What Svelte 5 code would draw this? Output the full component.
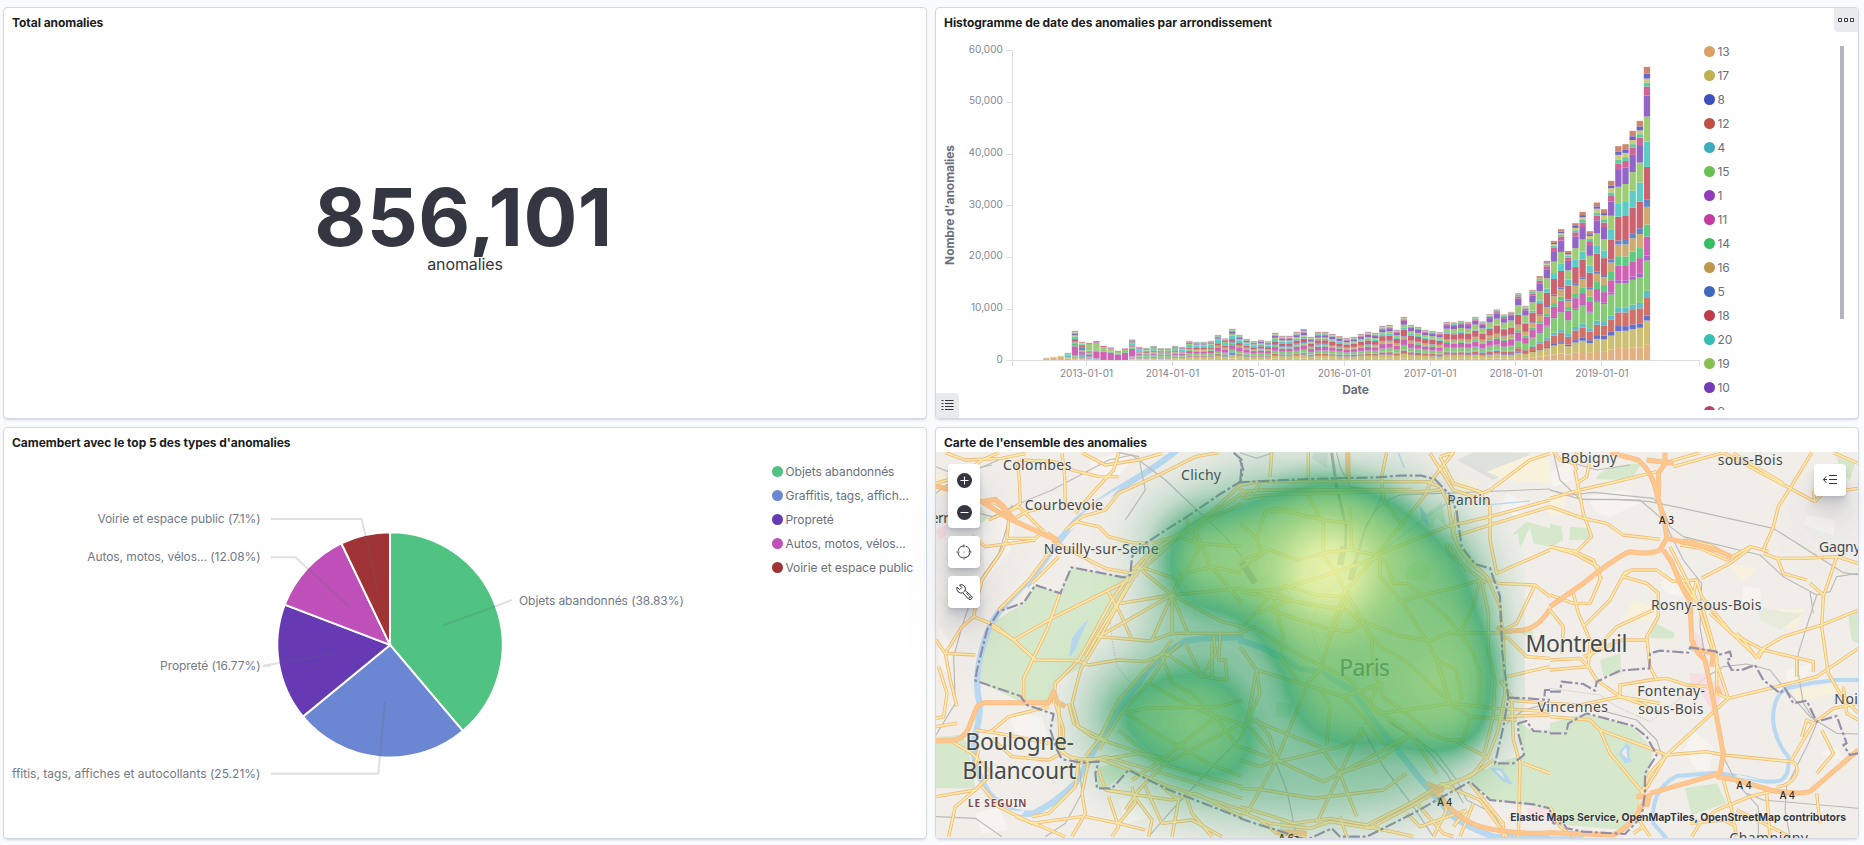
<script>
  // ---- histogram ----
  const legend = [
    ['13', '#daa066'], ['17', '#bfaf4f'], ['8', '#3d4fbd'], ['12', '#c04e43'], ['4', '#38aebd'],
    ['15', '#69c151'], ['1', '#903abc'], ['11', '#c53aa2'], ['14', '#36bf62'], ['16', '#c09648'],
    ['5', '#3c68bd'], ['18', '#c13a49'], ['20', '#34bfb4'], ['19', '#87c051'], ['10', '#753abc'], ['9', '#c03b7a']
  ];
  const stackColors = [
    '#e2b182', '#cdc075', '#6370cc', '#d07269', '#5fbcc8', '#86cc76', '#a866c9', '#d062b6', '#5dcb83', '#cdac70',
    '#6487c9', '#cd636f', '#5dccc4', '#9ecd75', '#9265c9', '#cf6495', '#60cb9c', '#cdca78', '#6a65c9', '#cd866f'
  ];
  const heights = [
    7, 10, 13, 22, 88, 55, 52, 57, 43, 38, 28, 35, 62, 40, 37, 43, 36, 36, 43, 40, 58, 55, 55, 58, 76, 65, 94, 76, 64, 57, 61, 57,
    82, 73, 73, 85, 93, 70, 85, 85, 79, 72, 67, 70, 79, 85, 82, 103, 106, 91, 130, 106, 100, 91, 88, 84, 115, 113, 118, 115,
    130, 116, 138, 152, 137, 145, 201, 163, 211, 252, 298, 358, 393, 328, 411, 445, 387, 473, 453, 538, 642, 648, 688, 718, 880
  ];
  const mixes = [
    [4, [3, 4, 0, 2, 4, 3, 2, 34, 12, 3, 4, 8, 9, 6, 4, 3, 3, 2, 2, 2]],
    [5, [3, 3, 0, 2, 6, 4, 3, 6, 3, 3, 10, 7, 3, 2, 0, 0, 0, 3, 0, 3]],
    [6, [2, 2, 0, 2, 3, 2, 2, 6, 3, 2, 2, 2, 5, 22, 2, 2, 0, 0, 0, 0]],
    [8, [0, 0, 0, 0, 0, 0, 0, 25, 2, 0, 0, 0, 0, 12, 1, 3, 0, 0, 0, 0]],
    [11, [0, 0, 0, 0, 0, 0, 0, 22, 2, 0, 0, 0, 3, 3, 2, 2, 0, 0, 0, 0]],
    [13, [4, 5, 2, 3, 3, 4, 2, 5, 3, 3, 2, 4, 7, 4, 3, 2, 2, 1, 1, 1]],
    [23, [4, 9, 2, 3, 2, 5, 2, 9, 3, 3, 2, 6, 10, 4, 4, 2, 2, 1, 1, 1]],
    [38, [5, 11, 2, 4, 2, 9, 2, 12, 3, 4, 3, 12, 5, 4, 8, 2, 3, 2, 2, 3]],
    [50, [5, 14, 2, 9, 3, 12, 2, 15, 3, 7, 2, 19, 8, 8, 12, 3, 3, 2, 2, 2]],
    [66, [7, 16, 3, 11, 4, 18, 3, 24, 7, 14, 3, 30, 2, 28, 20, 7, 5, 2, 1, 2]],
    [72, [20, 29, 5, 29, 10, 50, 4, 31, 12, 22, 5, 50, 23, 34, 34, 12, 5, 5, 5, 7]],
    [78, [28, 36, 12, 30, 12, 55, 5, 32, 22, 24, 7, 52, 24, 34, 38, 14, 10, 12, 7, 12]],
    [84, [46, 73, 15, 55, 19, 91, 15, 57, 36, 53, 23, 97, 76, 75, 63, 27, 12, 12, 15, 20]]
  ];
  function mixFor(i) {
    if (i < 3) return [8, 2, 0, 0, 0, 0, 0, 0, 0, 0, 0, 0, 0, 0, 0, 0, 0, 0, 0, 0];
    if (i < 4) return [6, 4, 0, 0, 4, 2, 0, 0, 3, 0, 0, 0, 3, 0, 0, 0, 0, 0, 0, 2];
    let k = 0;
    while (k < mixes.length - 2 && mixes[k + 1][0] <= i) k++;
    const [a, va] = mixes[k];
    const [b, vb] = mixes[k + 1];
    const sa = va.reduce((x, y) => x + y, 0);
    const sb = vb.reduce((x, y) => x + y, 0);
    const t = (i - a) / (b - a);
    return va.map((v, j) => (v / sa) * (1 - t) + (vb[j] / sb) * t);
  }
  const segments = heights.flatMap((h, i) => {
    const mix = mixFor(i);
    const sum = mix.reduce((x, y) => x + y, 0);
    let y = 360.2;
    return mix.map((m, j) => {
      const sh = (m / sum) * (h / 3);
      y -= sh;
      return { x: 1043.2 + i * 7.15, y, h: sh, c: stackColors[j] };
    }).filter((s) => s.h > 0.05);
  });
  const yTicks = [0, 10, 20, 30, 40, 50, 60].map((v) => ({
    label: v ? v + ',000' : '0', y: 360.3 - v * 5.17
  }));
  const xTicks = [2013, 2014, 2015, 2016, 2017, 2018, 2019].map((y, i) => ({
    label: y + '-01-01', x: 1086.4 + i * 85.9
  }));

  // ---- pie ----
  const slices = [
    ['Objets abandonnés', 38.83, '#50c282'],
    ['Graffitis, tags, affich...', 25.21, '#6b86d2'],
    ['Propreté', 16.77, '#663ab2'],
    ['Autos, motos, vélos...', 12.08, '#bf50b9'],
    ['Voirie et espace public', 7.11, '#a03335']
  ];
  const cx = 390, cy = 644.9, r = 112.7;
  let acc = 0;
  const wedges = slices.map(([, pct, color]) => {
    const a0 = (acc / 100) * 2 * Math.PI;
    acc += pct;
    const a1 = (acc / 100) * 2 * Math.PI;
    return {
      color,
      d: `M${cx} ${cy}L${cx + r * Math.sin(a0)} ${cy - r * Math.cos(a0)}A${r} ${r} 0 0 1 ${cx + r * Math.sin(a1)} ${cy - r * Math.cos(a1)}Z`
    };
  });
  const leaders = [
    'M813 291H1085L1133 503', 'M813 406H886L1047 553', 'M813 731H788L1003 695', 'M813 1055H1135L1155 838',
    'M1535 534L1500 548L1330 610'
  ];
  const pieLabels = [
    ['Voirie et espace public (7.1%)', 260.5, 522.8, 'end', -0.09],
    ['Autos, motos, vélos... (12.08%)', 260.5, 561, 'end', -0.09],
    ['Propreté (16.77%)', 260.5, 670, 'end', -0.07],
    ['Graffitis, tags, affiches et autocollants (25.21%)', 260.5, 778, 'end', 0.01],
    ['Objets abandonnés (38.83%)', 519, 605, 'start', -0.07]
  ];

  // ---- map, three tiles drawn at triple resolution ----
  const tiles = [
    {
      x: 932,
      blocks: ['M150 240L220 190L250 250L230 340L160 420Z', 'M470 60L560 40L600 60L560 110L490 120Z', 'M230 820L330 830L350 900L250 880Z', 'M20 560L60 620L50 700L20 680Z', 'M560 1080L640 1060L660 1130L580 1150Z', 'M130 1120L200 1100L230 1170L150 1180Z'],
      parks: ['M418 380L575 412L600 405L560 480L500 590L450 680L380 720L365 780L275 790L205 755L137 720L150 640L180 550L225 520L275 490L310 435L385 458Z', 'M12 890L95 884L112 940L130 1045L12 1045Z', 'M495 985L555 965L580 1000L520 1045L497 1045Z', 'M350 1085L395 1050L430 1030L400 1080L365 1105Z', 'M130 180L170 230L150 250L120 240Z'],
      greys: [],
      yellows: ['M12 100L60 110L40 170L12 160Z'],
      pinks: ['M12 270L50 250L40 290L20 300Z'],
      lakes: ['M470 538L445 560L420 595L412 652L430 630L445 590Z'],
      river: ['M735 30Q690 70 580 135Q500 180 430 245Q390 290 360 330L290 430L205 510Q165 560 150 630Q125 720 143 790Q145 840 125 900Q120 980 170 1060Q235 1130 305 1120Q370 1090 430 1030Q470 970 500 900L560 810L640 700Q690 640 760 603Q830 590 935 592'],
      islands: ['M565 142L500 180L420 250L412 275L430 260L520 190Z', 'M350 335L300 415L290 420L310 375Z', 'M285 440L225 500L270 490L300 455Z', 'M210 1095Q240 1120 280 1110L270 1125L225 1120Z'],
      rail: ['M12 160L70 115L200 60', 'M12 80L60 100L180 75', 'M70 200L180 230L240 200L360 150L530 60L600 45L700 120L880 290L930 350', 'M240 195L225 260L200 340L130 440L90 560L65 650L70 790L12 885', 'M12 1130L130 1135L210 1190', 'M440 955L450 1060L400 1150L340 1190', 'M930 890L860 960L720 1110L650 1190', 'M560 38L620 50L640 150L580 240'],
      dotted: ['M535 540L540 600L555 680L600 735L650 730', 'M430 330L520 410'],
      minor: [
        'M40 38L100 60L210 55L280 40', 'M12 130L80 110L150 60L200 38', 'M255 60L262 120L265 190L230 215', 'M390 40L398 110L400 200', 'M265 60L370 65L420 90L500 110L560 110', 'M450 38L520 75L620 60L690 40', 'M560 38L545 90L480 160L430 220',
        'M150 190Q210 175 230 240L225 295L310 295L340 270', 'M170 240L260 200L330 270L350 295', 'M240 240L285 215L350 200', 'M120 285L160 320L235 310L310 300', 'M225 300L205 340L150 420L130 500L125 530L175 550L200 565L245 600L310 660L430 662',
        'M12 600L40 640L90 560L125 530', 'M40 640L130 645', 'M40 640L55 720L75 800', 'M20 680L45 760L35 830L12 835', 'M12 860L75 850', 'M360 300L430 340L520 385L600 400', 'M400 270L450 230L520 210L560 160L700 95L790 50L860 38', 'M430 245L500 260L530 290L600 308L650 310',
        'M365 320L290 420L200 510', 'M300 430L320 410L380 350', 'M180 560L245 600L360 535L590 420', 'M385 458L345 570L275 715L275 790', 'M245 600L300 650',
        'M600 400Q620 360 680 320L830 230L930 160', 'M610 410Q640 345 700 310L840 215L930 130', 'M600 395L540 480L480 590L440 660L370 730L365 790', 'M610 405L560 490L500 600L445 690L420 790L440 860L520 900', 'M590 430L555 490L500 580L460 650',
        'M600 385L640 385L740 420L720 465L565 490', 'M720 465L500 590L655 603L720 580L930 580', 'M720 465L660 600', 'M720 465L720 580', 'M720 465L770 585', 'M720 465L870 545L930 560', 'M720 465L930 445', 'M720 465L640 400L615 375', 'M720 465L800 330L760 230', 'M740 405L840 380L930 400', 'M640 380L740 290L800 310L930 320', 'M660 310L790 270L840 235L930 190', 'M790 270L830 370L930 490',
        'M525 450L565 520L600 600', 'M430 660L470 675L560 660L640 665L700 640', 'M720 600L690 640L640 690L560 780L500 900L460 950', 'M745 610L700 650L650 730L570 815L500 930', 'M700 640L810 710L885 720L880 660L860 660L865 580', 'M760 610L810 710L850 640L845 590', 'M840 610L840 715', 'M650 730L760 790L850 830L930 850', 'M570 820L640 805L860 800L930 780', 'M575 815L690 890L830 970L930 1010', 'M690 650L720 730L780 760L850 830L925 930', 'M850 830L690 960L600 1020', 'M560 870L640 940L720 960L930 850',
        'M410 790L425 850L480 890L600 930L700 975L930 1040', 'M370 790L395 870L390 935Q420 965 500 955L580 985L700 1035L930 1110', 'M380 790L385 930L440 970L520 950L590 970L760 1020L930 1075', 'M500 960L620 940L710 960L620 1050L580 1110',
        'M130 870L200 880L350 910', 'M170 880L230 830L350 800', 'M180 895L240 950L350 960L390 940', 'M60 905L120 940L180 1000L130 1050L12 1070', 'M130 1050L70 1100L50 1190', 'M150 1040L200 1100L300 1150L450 1130', 'M440 960L430 1040L350 1120L300 1130', 'M470 960L450 1060L460 1120L420 1190', 'M500 990L520 1050L600 1060L660 1140L650 1190', 'M520 1050L580 1060L720 1080L790 1060L930 1130', 'M460 1130L560 1150L640 1170', 'M530 1070L560 1160L540 1190', 'M600 1040L610 1090L560 1150', 'M690 1040L740 1080L720 1190', 'M640 1040L690 1150L780 1140L870 1190', 'M760 1060L780 1120L840 1190', 'M250 1130L330 1160L400 1190', 'M140 930L120 1010'
      ],
      motor: ['M12 138L70 155L150 185L230 235L360 295', 'M150 185L190 178L215 200L250 245', 'M12 903L70 900Q105 890 115 850L135 800Q150 785 180 788L350 788L365 755L375 785L400 800', 'M345 280L375 300L365 310'],
      borders: ['M930 122L860 165L780 220L640 310L600 350L595 405L575 412L418 382L385 460L310 435L275 488L200 515L165 570L135 690L130 722L265 768L285 795L365 822L355 870L375 930L390 958L450 968L500 965L490 1000L495 1045L540 1045L590 990L700 1045L930 1135', 'M905 38L930 60L925 122'],
      labels: [['Colombes', 213, 91, 42, 205], ['Courbevoie', 278, 210, 42, 235], ['Clichy', 747, 119, 42, 120], ['Neuilly-sur-Seine', 335, 343, 42, 345], ['erre', -4, 248, 42, 76], ['Boulogne-', 100, 931, 69, 326], ['Billancourt', 91, 1018, 69, 342]]
    },
    {
      x: 1240,
      blocks: ['M800 160L860 190L830 230L780 210Z', 'M0 790L60 800L50 860L0 850Z', 'M670 640L720 640L700 700Z'],
      parks: ['M860 245L930 265L930 320L880 310L870 260L840 325L835 280L815 285Z', 'M495 395L535 355L575 390L560 420L500 420Z', 'M560 220L605 185L620 265L590 230L575 265Z', 'M835 845L880 875L930 870L930 1110L860 1095L750 1080L690 1025L765 970L850 945Z', 'M110 785L155 790L150 835L105 830Z', 'M830 570L875 565L885 605Z', 'M120 1135L200 1155L190 1185L120 1180Z', 'M680 1005L730 975L740 1000L700 1030Z'],
      greys: ['M700 38L865 38L870 60L760 120L650 60Z', 'M220 38L265 38L260 85L215 55Z'],
      yellows: ['M740 95L870 45L930 60L930 130L800 120Z', 'M650 110L720 130L690 160L650 150Z'],
      pinks: ['M860 1103L930 1100L930 1140L870 1140Z', 'M350 890L410 890L410 945L360 945Z'],
      lakes: ['M750 985L785 985L820 1035L790 1025Z', 'M538 195L560 225L570 262L545 240Z'],
      river: ['M-5 600L60 620L130 655L180 685L240 695L340 752L400 840L480 940L560 1040L640 1130Q680 1160 760 1190L930 1195'],
      islands: ['M230 690L300 745L285 752L230 705Z', 'M165 660L200 675L180 680Z', 'M765 990L782 993L795 1018Z'],
      canal: ['M430 330L560 230L620 190', 'M740 195L870 183', 'M475 38L493 83'],
      rail: ['M325 420L370 280Q400 190 480 165L600 160L930 147', 'M335 420L375 270L430 160', 'M440 840L520 890L590 940L650 1020L680 1080L760 1120L800 1190', 'M450 850L540 905L620 1000L670 1090', 'M365 860L430 980L520 1100L580 1190', 'M105 960L140 1050L170 1190', 'M800 850L850 810L930 790', 'M0 38L50 55L100 38', 'M290 38L300 80L330 140L440 155L600 150'],
      thickRail: ['M275 38L290 140L318 260L316 330', 'M345 360L330 420'],
      wideRail: ['M312 320L300 375', 'M342 380L332 420', 'M5 365L45 430'],
      dotted: ['M40 450L140 450L210 550L240 660', 'M210 550L280 430'],
      minor: [
        'M0 135L60 125L320 125L560 125L600 140L625 190L640 290L660 330L740 410', 'M0 155L70 150L300 150L515 148', 'M0 145L30 175L60 130', 'M0 175L80 165L250 160L420 155L540 155L600 150',
        'M95 38L90 110', 'M205 38L205 120', 'M440 38L425 110L430 180L490 260', 'M0 250L50 295L75 215L140 215L250 240L335 250', 'M75 215L110 205L180 215', 'M50 290L65 345L0 385', 'M0 360L90 330L170 360L270 335L335 330L410 345L620 260L750 230L930 180', 'M600 50L640 38L575 120L555 165L410 345', 'M410 345L440 370L460 430L500 430L545 465L640 445L720 420', 'M410 345L315 455L265 590', 'M250 240L250 345L285 395L320 460L370 550', 'M205 165L240 240', 'M330 200L335 330',
        'M0 450L50 455L150 440L290 395L420 350', 'M0 455L140 480L250 500L320 510L360 545', 'M130 435L230 465L310 470', 'M50 520L150 480L100 450L45 520L0 570', 'M100 470L130 590L125 640', 'M90 510L150 530L280 570L330 575L380 540', 'M315 455L370 550L420 620L500 665L630 790', 'M330 455L275 580L240 690L200 730', 'M420 350L420 410L485 485L560 600L590 660L630 790', 'M485 485L545 465L620 530L660 580L700 640L720 700L720 800', 'M385 550L470 585L565 603L625 580L740 578L790 580', 'M370 550L395 600L400 690L415 730', 'M720 420L700 500L660 580', 'M725 425L745 520L745 640L765 720L760 830L730 950', 'M740 410L780 500L790 600L795 760L775 870L740 960', 'M620 310L625 340L700 400L740 430', 'M690 370L740 410L775 430L885 435L930 470', 'M885 435L830 550L790 570', 'M650 210L640 280L660 330L690 370', 'M570 40L640 150L700 170L750 150L870 60L930 40', 'M600 50L640 130L720 155L750 200L750 300L770 400L930 330', 'M640 290L750 255L930 200', 'M630 310L680 395',
        'M0 580L40 560L150 630L330 720L400 800L510 880L590 1000', 'M0 620L50 690L180 730L310 770L400 740L430 730', 'M50 690L60 760L20 850', 'M180 730L120 650', 'M50 690L20 850L110 960L200 740', 'M310 770L370 830L440 920L500 890', 'M415 730L385 800L420 820L570 800L630 790', 'M415 730L430 770L500 820L570 880L620 900L670 900L690 830', 'M630 790L590 660L650 690L665 780', 'M630 790L690 830L830 840', 'M640 790L770 805L930 815', 'M20 830L110 870L240 920L300 1000L420 960L510 885', 'M0 920L110 960L250 1025L300 1000L430 930L500 890', 'M20 850L0 900', 'M240 740L270 800L260 920', 'M365 865L300 1000L350 1130', 'M110 960L60 1050L20 1120', 'M0 1045L60 1048L220 1075L430 1050L500 1000', 'M300 1000L230 1150', 'M110 965L160 955L300 920L380 880', 'M0 860L50 840L90 890L110 960L60 980L0 960', 'M0 1100L100 1130L160 1150L270 1135L380 1155L510 1090L590 1040L690 1010L760 960', 'M0 1115L90 1150L210 1165L270 1145L390 1165L520 1095L600 1050L700 1000L740 950L640 900', 'M60 1140L110 1180L200 1190', 'M380 1160L480 1180L520 1190', 'M300 1130L320 1190', 'M600 1030L720 1080L800 1190', 'M690 1030L740 1090L790 1150L790 1190', 'M590 1060L620 1110L580 1190', 'M530 1090L610 1180L640 1190', 'M500 1120L540 1160L680 1110', 'M805 780L930 790', 'M815 780L820 900L840 970L835 1190', 'M800 590L860 650L930 655', 'M800 710L930 680', 'M780 720L820 780', 'M765 830L930 825', 'M850 970L930 1000', 'M680 1110L640 1160', 'M700 1090L660 1190'
      ],
      motor: ['M323 38L325 125', 'M770 560L790 575L850 570Q900 560 930 505', 'M780 560L795 600', 'M560 1030L605 1050L570 1060', 'M600 1065Q640 1130 720 1160Q820 1185 930 1178', 'M110 1175L200 1180'],
      borders: ['M-5 127L200 117L410 112L480 107L545 107L585 118L630 165L650 215L665 320L705 372L750 385L780 470L787 640L805 773L790 860L765 970L820 970L852 945L835 880L835 850L860 843L880 873L930 876', 'M805 773L860 775L930 780', 'M0 60L10 90L0 127', 'M0 1135L60 1155L110 1170L200 1200L275 1165L300 1190L380 1190L520 1120L590 1080L690 1025L750 1080L880 1093L930 1105', 'M930 750L915 750L913 775'],
      labels: [['Pantin', 622, 194, 42, 130], ['Paris', 298, 708, 69, 152]]
    },
    {
      x: 1550,
      blocks: ['M0 100L60 60L70 120L10 140Z', 'M140 220L110 170L230 150L270 190L180 230Z', 'M330 430L380 390L400 470L350 460Z', 'M580 437L632 445L630 500L575 480Z', 'M770 225L855 240L850 285L760 255Z', 'M400 930L435 875L490 920L480 990L440 990Z', 'M50 850L110 835L120 880L60 880Z', 'M710 690L790 670L750 740L710 720Z', 'M810 940L860 920L880 960L830 950Z'],
      parks: ['M150 100L180 80L275 68L245 120L135 118Z', 'M0 250L35 260L40 300L5 320L0 310Z', 'M60 260L120 265L118 300L58 300Z', 'M310 545L375 580L370 595L300 595Z', 'M150 660L210 640L215 700L160 710Z', 'M0 850L110 820L250 860L310 930L280 1060L230 1170L40 1155L0 1110Z', 'M405 1045L500 1030L530 1090L425 1125Z', 'M895 530L925 515L925 610L905 600Z', 'M860 50L915 70L900 120L870 90Z'],
      pale: ['M620 500L700 515L760 520L690 570L630 540Z'],
      greys: [],
      yellows: ['M530 370L625 385L575 425Z', 'M250 480L330 510L300 545L220 540Z', 'M690 510L765 505L740 570L690 560Z', 'M730 750L860 730L890 750L740 785Z', 'M0 160L50 170L40 220L0 230Z'],
      pinks: ['M420 700L480 700L480 740L420 740Z', 'M440 730L520 720L520 760L490 820L470 790Z', 'M430 570L460 600L460 630L430 620Z', 'M0 1100L30 1120L0 1145Z'],
      lakes: ['M205 940L230 908L240 920L238 950L248 965L225 970Z'],
      river: ['M925 720L860 720L790 728L710 745Q665 770 670 850Q680 910 715 950Q720 1010 690 1022Q650 1030 600 1015L500 998L380 1008Q300 1050 310 1150L350 1195', 'M0 1195L100 1195'],
      islands: ['M560 1003L640 1022L560 1012Z', 'M215 940L228 920L232 955Z'],
      rail: ['M0 150L90 178L200 178L300 185L400 205L670 265L880 398L925 405', 'M0 150L60 165L130 157L310 175L340 205', 'M90 178L270 180L340 240L400 360L455 430L450 560L470 680L500 820L520 950L560 1030L625 1100L625 1190', 'M280 70L320 160L360 260L400 290L630 345L700 410L800 465L840 455L860 410L925 400', 'M800 465L770 560L745 640L745 700L760 790L800 850L775 910L740 980L710 1040L705 1110L720 1190', 'M10 38L30 120L90 178', 'M470 710L520 680L590 672L660 690L700 740L780 830L860 880L925 882', 'M130 805L260 840L320 900L340 960', 'M590 1060L640 1080L925 1105', 'M40 60L140 90L240 75', 'M780 455L790 520'],
      dotted: ['M0 745L150 765L200 800L300 845L360 800L470 710'],
      minor: [
        'M0 175L90 150L200 125L320 95', 'M0 200L100 235L170 250L220 285L330 298', 'M75 90L100 220L125 290L80 335L0 320', 'M120 60L110 110L80 130', 'M80 90L70 60L80 38', 'M370 80L520 38L720 145L795 185', 'M550 40L700 130', 'M785 38L720 145L685 200L670 260L640 330', 'M795 185L820 160L925 145', 'M795 185L790 150', 'M640 340L680 355L760 355L860 350L925 370', 'M680 350L700 400L770 420', 'M860 350L820 470L815 560L835 700L870 760L925 820', 'M390 315L450 325L530 360L600 320L640 330L655 335', 'M400 300L480 315L540 350', 'M455 415L540 370L600 325', 'M360 320L400 400L440 480L490 640L535 775', 'M345 340L420 460L460 510L500 650L500 760L535 775', 'M365 425L440 420L430 465L410 480', 'M440 420L455 470L545 580L620 650L640 625', 'M480 520L545 580L640 630L790 665L790 695', 'M640 625L700 590L815 555L925 510', 'M625 655L645 620', 'M620 655L580 600L560 580', 'M740 655L740 710', 'M535 775L660 745L800 710L925 625', 'M535 775L350 945L280 1060', 'M350 945L300 925L150 870L120 840L0 830', 'M150 870L180 940L280 1060', 'M350 945L470 935L520 945L725 965', 'M725 965Q745 970 740 1000Q720 1040 680 1040', 'M725 960L760 900L790 850L850 805L925 790', 'M790 850L770 840L755 890', 'M520 1020L545 1110L560 1190', 'M500 1110L600 1070L660 1055', 'M0 320L70 340L145 380L150 420L120 490L70 490L0 465', 'M75 335L130 360L155 420', 'M220 400L245 390L320 390L370 425', 'M245 390L220 405L180 480L100 560', 'M220 410L290 430L325 460L325 530L290 590L300 680L320 720', 'M70 460L85 520L120 600L115 680', 'M0 510L40 560L35 640', 'M100 650L150 630L210 600L290 600', 'M115 680L90 655L0 660', 'M115 680L0 690', 'M115 680L140 720L210 770L330 790', 'M210 770L210 735L300 720L350 715L410 735L470 740', 'M350 945L300 1000L270 1070', 'M0 1100L30 1160L70 1190', 'M0 790L90 795L210 770', 'M210 770L270 790L330 820', 'M110 660L200 560L310 510', 'M780 430L820 465', 'M850 38L925 70', 'M450 38L340 70', 'M650 1060L660 1190', 'M800 1060L810 1150', 'M500 1110L450 1150L425 1190', 'M270 1090L260 1130L300 1190', 'M280 1160L250 1180', 'M560 1110L640 1150L720 1190', 'M880 740L890 820L925 840', 'M815 870L850 940L800 1000', 'M0 20L30 60L70 70', 'M420 1150L520 1140L560 1160'
      ],
      motor: ['M180 38L265 60Q310 100 320 160L345 250L350 295L330 330Q300 345 240 335Q200 350 100 430L0 500', 'M345 38L345 70L325 100L325 170', 'M290 60L370 70', 'M350 295Q370 300 400 305L500 330L545 350', 'M340 330L365 365Q395 450 420 480L425 600Q440 640 465 660L490 780L520 940L510 1000L300 1060', 'M420 622L490 640L485 680', 'M500 740L510 760', 'M260 1070L290 1070L270 1110Q230 1170 190 1185L0 1178', 'M500 1010L560 1020L660 1050Q740 1065 780 1055Q820 1020 925 930', 'M290 1100L300 1060'],
      borders: ['M0 755L30 755L35 725L100 732L135 752L140 725L210 692L298 685L300 640L330 632L415 638L420 622L500 635L505 645L540 635L545 655L530 660L545 690L575 690L615 675L640 720L690 760L705 745L730 790L770 782L800 845L860 828L875 870L890 910L880 915L900 945L925 940', 'M0 880L48 880L55 850L110 820L250 858L290 890L320 945L285 1000L285 1060L275 1130L225 1182L100 1175L50 1165L40 1150L10 1150L0 1110'],
      labels: [['Bobigny', 33, 70, 42, 168], ['sous-Bois', 503, 74, 42, 195], ['Gagny', 807, 336, 42, 125], ['Rosny-sous-Bois', 303, 509, 42, 331], ['Fontenay-', 262, 768, 42, 203], ['sous-Bois', 265, 823, 42, 195], ['Noisy', 853, 791, 42, 115], ['Champigny', 538, 1208, 42, 236]]
    }
  ];
  const shields = [['A 3', 1659, 523.8], ['A 4', 1736.6, 789.3], ['A 4', 1779.8, 799], ['A 4', 1437.2, 806], ['A 6a', 1278.5, 841.5]];
  const tf = (t) => `translate(${t.x} 440) scale(.33333)`;
</script>

<main class="dashboard">
  <section class="panel">
    <h2>Total anomalies</h2>
    <div class="metric">
      <strong>856,101</strong>
      <span>anomalies</span>
    </div>
  </section>

  <section class="panel">
    <h2>Histogramme de date des anomalies par arrondissement</h2>
    <div class="body">
      <svg class="chart" width="764" height="386" viewBox="936 32 764 386">
        {#each segments as s}
          <rect x={s.x} y={s.y} width="6.3" height={s.h} fill={s.c} />
        {/each}
        <path class="axis" d="M1012.5 50V366M1007 360.5H1699.5V366" />
        {#each yTicks as t}
          <path class="axis" d="M1006.5 {Math.round(t.y) + 0.5}H1012.5" />
          <text class="tick" x="1003" y={t.y + 2.4} text-anchor="end">{t.label}</text>
        {/each}
        {#each xTicks as t}
          <path class="axis" d="M{Math.floor(t.x) + 0.5} 361V366" />
          <text class="tick" x={t.x + 0.2} y="377" text-anchor="middle">{t.label}</text>
        {/each}
        <text class="axis-title" x="1355.5" y="394" text-anchor="middle">Date</text>
        <text class="axis-title" transform="translate(954 205) rotate(-90)" text-anchor="middle">Nombre d'anomalies</text>
      </svg>
      <ul class="legend">
        {#each legend as [name, color]}
          <li><i style="background:{color}"></i>{name}</li>
        {/each}
      </ul>
      <div class="scroll"></div>
    </div>
    <button class="options" aria-label="Options">
      <svg width="16" height="16" viewBox="0 0 16 16"><path d="M.5 6.5h3v3h-3zM6.5 6.5h3v3h-3zM12.5 6.5h3v3h-3z" fill="#fff" stroke="#343741" /></svg>
    </button>
    <button class="toggle" aria-label="Légende">
      <svg width="13" height="13" viewBox="0 0 13 13"><path d="M.5 1.5h2M4 1.5h8.500M.5 4.500h2M4 4.500h8.500M.5 7.500h2M4 7.500h8.500M.5 10.500h2M4 10.500h8.500" stroke="#343741" stroke-width="1" /></svg>
    </button>
  </section>

  <section class="panel">
    <h2>Camembert avec le top 5 des types d'anomalies</h2>
    <div class="body pie">
      <svg width="756" height="386" viewBox="12 452 756 386">
        {#each wedges as w}
          <path d={w.d} fill={w.color} stroke="#fff" stroke-width="2" />
        {/each}
        <g transform="translate(0 422) scale(.33333)">
          {#each leaders as d}
            <path class="leader" {d} />
          {/each}
        </g>
        {#each pieLabels as [label, x, y, anchor, spacing]}
          <text class="pie-label" {x} {y} text-anchor={anchor} letter-spacing={spacing}>{label}</text>
        {/each}
      </svg>
      <ul class="legend wide">
        {#each slices as [name, , color]}
          <li><i style="background:{color}"></i>{name}</li>
        {/each}
      </ul>
    </div>
  </section>

  <section class="panel">
    <h2>Carte de l'ensemble des anomalies</h2>
    <div class="map">
      <svg width="922" height="386" viewBox="936 452 922 386">
        <defs>
          <filter id="ramp" filterUnits="userSpaceOnUse" x="936" y="400" width="922" height="500" color-interpolation-filters="sRGB">
            <feColorMatrix values="0 0 0 1 0  0 0 0 1 0  0 0 0 1 0  0 0 0 1 0" />
            <feComponentTransfer>
              <feFuncR type="table" tableValues=".2 .2 .17 .13 .26 .39 .51 .67 .83 .92 .95" />
              <feFuncG type="table" tableValues=".62 .62 .62 .62 .68 .74 .79 .86 .93 .96 .97" />
              <feFuncB type="table" tableValues=".42 .41 .39 .36 .36 .38 .40 .47 .56 .62 .66" />
              <feFuncA type="table" tableValues="0 .25 .52 .75 .76 .76 .76 .76 .76 .76 .76" />
            </feComponentTransfer>
          </filter>
          <filter id="b17" x="-40%" y="-40%" width="180%" height="180%"><feGaussianBlur stdDeviation="17.5" /></filter>
          <filter id="b26" x="-30%" y="-30%" width="160%" height="160%"><feGaussianBlur stdDeviation="26" /></filter>
          <radialGradient id="hot">
            <stop offset="0" stop-color="#000" stop-opacity=".76" />
            <stop offset=".22" stop-color="#000" stop-opacity=".63" />
            <stop offset=".5" stop-color="#000" stop-opacity=".3" />
            <stop offset=".75" stop-color="#000" stop-opacity=".09" />
            <stop offset="1" stop-color="#000" stop-opacity="0" />
          </radialGradient>
          <radialGradient id="warm">
            <stop offset="0" stop-color="#000" stop-opacity=".2" />
            <stop offset="1" stop-color="#000" stop-opacity="0" />
          </radialGradient>
        </defs>
        <rect x="936" y="452" width="922" height="386" fill="#f1eeea" />
        {#each tiles as t}
          <g transform={tf(t)}>
            {#each t.blocks as d}<path {d} fill="#f7f4f0" />{/each}
            {#each t.greys as d}<path {d} fill="#dfe1dd" />{/each}
            {#each t.yellows as d}<path {d} fill="#f8f1dc" />{/each}
            {#each t.pinks as d}<path {d} fill="#f6dfe3" />{/each}
            {#each t.pale ?? [] as d}<path {d} fill="#e6ebdc" />{/each}
            {#each t.parks as d}<path {d} fill="#d6e8cb" />{/each}
          </g>
        {/each}
        {#each tiles as t}
          <g transform={tf(t)}>
            {#each t.river as d}<path class="line" {d} stroke="#b9d8f1" stroke-width={t.x === 1550 ? 12 : 19} />{/each}
            {#each t.canal ?? [] as d}<path class="line" {d} stroke="#b9d8f1" stroke-width="4" />{/each}
            {#each t.lakes as d}<path {d} fill="#b9d8f1" />{/each}
            {#each t.islands as d}<path {d} fill="#f1eeea" />{/each}
            {#each t.rail as d}<path class="line" {d} stroke="#bbbab8" stroke-width="3.400" />{/each}
            {#each t.thickRail ?? [] as d}<path class="line" {d} stroke="#b3b5b1" stroke-width="9" />{/each}
            {#each t.wideRail ?? [] as d}<path class="line" {d} stroke="#b3b5b1" stroke-width="20" />{/each}
            {#each t.dotted as d}<path class="line" {d} stroke="#c5c3c0" stroke-width="2.5" stroke-dasharray="5 3" />{/each}
          </g>
        {/each}
        {#each tiles as t}
          <g transform={tf(t)}>{#each t.minor as d}<path class="line" {d} stroke="#efba80" stroke-width="10" />{/each}</g>
        {/each}
        {#each tiles as t}
          <g transform={tf(t)}>
            {#each t.minor as d}<path class="line" {d} stroke="#ffeaa4" stroke-width="5.2" />{/each}
            {#each t.motor as d}<path class="line" {d} stroke="#f9bd85" stroke-width="15" />{/each}
            {#each t.motor as d}<path class="line" {d} stroke="#ffc78d" stroke-width="11" />{/each}
            {#each t.borders as d}<path class="line border" {d} />{/each}
          </g>
        {/each}
        {#each tiles as t}
          <g transform={tf(t)}>
            {#each t.labels as [label, x, y, size, w]}
              <text class="place" {x} {y} font-size={size} textLength={w}>{label}</text>
            {/each}
          </g>
        {/each}
        <text class="place" x="1525.5" y="652" font-size="23" textLength="102">Montreuil</text>
        <text class="place" x="1537.5" y="712" font-size="14" textLength="70.5">Vincennes</text>
        <text class="quarter" x="968" y="806.5" textLength="58.5">LE SEGUIN</text>
        {#each shields as [label, x, y]}
          <text class="shield" {x} {y}>{label}</text>
        {/each}
        <g filter="url(#ramp)">
          <path filter="url(#b26)" fill-opacity=".2" d="M1145 515L1250 468L1400 472L1480 540L1505 640L1495 750L1410 812L1290 825L1170 810L1085 755L1085 680L1150 640Z" />
          <path filter="url(#b17)" fill-opacity=".33" d="M1177 553Q1180 533 1200 526L1257 510L1333 490L1383 509L1450 550L1472 595L1490 672L1484 722Q1472 747 1443 747L1383 737L1340 741L1303 720L1284 662Q1282 625 1255 611L1215 600L1180 590Z" />
          <path filter="url(#b17)" fill-opacity=".22" d="M1118 697L1187 676L1227 690L1250 732L1247 770L1210 778L1160 754L1115 724Z" />
          <circle cx="1329" cy="571" r="114" fill="url(#hot)" />
          <circle cx="1435" cy="680" r="80" fill="url(#warm)" />
          <circle cx="1207" cy="558" r="65" fill="url(#warm)" opacity=".7" />
          <circle cx="1194" cy="724" r="72" fill="url(#warm)" opacity=".8" />
          <circle cx="1255" cy="560" r="70" fill="url(#warm)" opacity=".3" />
        </g>
      </svg>
      <div class="controls">
        <div class="box zoomers">
          <button aria-label="Zoom avant"><svg width="16" height="16" viewBox="0 0 16 16"><circle cx="8.500" cy="8.500" r="7.500" fill="#343741" /><path d="M4.500 8.500h8M8.500 4.500v8" stroke="#fff" /></svg></button>
          <button aria-label="Zoom arrière"><svg width="16" height="16" viewBox="0 0 16 16"><circle cx="8.500" cy="8.500" r="7.500" fill="#343741" /><path d="M4.500 8.500h8" stroke="#fff" /></svg></button>
        </div>
        <div class="box"><button aria-label="Centrer"><svg width="16" height="16" viewBox="0 0 16 16" fill="none" stroke="#343741"><circle cx="8" cy="8" r="6" stroke-dasharray="7.4 2.02" stroke-dashoffset="-1" /><path d="M8 .5v2.8M8 12.7v2.8M.5 8h2.8M12.7 8h2.8M7.5 8h1" /></svg></button></div>
        <div class="box"><button aria-label="Outils"><svg width="17" height="17" viewBox="0 0 17 17" fill="none" stroke="#343741"><path d="M1 3.1L3.7 5.6L5.9 3.4L3.5 1Q6.3-.1 8.3 1.9Q10 3.9 9.1 6.4L15.5 12.1Q16.8 13.5 15.6 14.9Q14.1 16.4 12.5 15L6.7 8.7Q4.2 9.8 2.2 7.9Q.2 5.8 1 3.1Z" /><path d="M10.3 9.2L12.7 11.4M7.2 8.3L9 6.5" /><circle cx="13.8" cy="13.3" r=".65" /></svg></button></div>
      </div>
      <div class="box layers"><button aria-label="Couches"><svg width="16" height="16" viewBox="0 0 16 16" fill="none" stroke="#343741"><path d="M7 3.500H15M7 7.500H15M7 11.500H15M5 7.500H1.500M4.300 4.300L1.400 7.500L4.300 10.700" /></svg></button></div>
      <div class="credit">Elastic Maps Service, OpenMapTiles, OpenStreetMap contributors</div>
    </div>
  </section>
</main>

<style>
  :global(body) { background: #fafbfd; overflow: hidden; }
  .dashboard {
    box-sizing: border-box; height: 845px; padding: 7px 5px 0 3px;
    display: grid; grid-template-columns: 924px 924px; grid-template-rows: 412px 412px; gap: 8px;
    font-family: Inter, sans-serif; color: #343741;
  }
  .panel {
    position: relative; display: flex; flex-direction: column; box-sizing: border-box; min-width: 0;
    background: #fff; border: 1px solid #d3dae6; border-radius: 4px;
    box-shadow: 0 2px 2px -1px rgba(152, 162, 179, .3), 0 1px 5px -2px rgba(152, 162, 179, .3);
  }
  h2 { margin: 0; height: 19px; padding: 5px 8px 0; font-size: 12px; font-weight: 700; line-height: 20px; letter-spacing: -.05px; color: #1a1c21; white-space: nowrap; }
  .metric { flex: 1; display: flex; flex-direction: column; align-items: center; justify-content: center; padding-top: 3px; }
  .metric strong { font-size: 80px; line-height: 80px; font-weight: 700; letter-spacing: .5px; margin-right: 3px; overflow: hidden; }
  .metric span { font-size: 16px; line-height: 24px; margin-top: -5px; letter-spacing: -.1px; }
  .body { display: flex; height: 386px; }
  .body > svg { flex: none; }
  .pie { padding-left: 8px; }
  .chart { display: block; }
  .tick { font-size: 10px; fill: #7f8693; letter-spacing: .07px; }
  .axis { fill: none; stroke: #ddd; }
  .axis-title { font-size: 12px; font-weight: 700; fill: #69707d; letter-spacing: -.08px; }
  .pie-label { font-size: 12px; fill: #727986; }
  .leader { fill: none; stroke: #64646e; stroke-opacity: .2; stroke-width: 6; }
  .legend { list-style: none; margin: 7px 0 8px; padding: 0 0 0 3.500px; width: 136.500px; height: 371px; overflow: hidden; font-size: 12px; letter-spacing: -.07px; color: #69707d; }
  .legend.wide { width: 150px; }
  .legend li { height: 24px; display: flex; align-items: center; gap: 3px; white-space: nowrap; }
  .legend i { width: 11px; height: 11px; border-radius: 50%; flex: none; }
  .scroll { width: 4px; height: 273px; margin-top: 14px; background: #b2b5be; }
  button { border: 0; padding: 0; background: none; display: flex; align-items: center; justify-content: center; }
  .options { position: absolute; top: 0; right: 0; width: 24px; height: 24px; background: #e9eaec; border-radius: 0 3px 0 4px; }
  .toggle { position: absolute; left: 0; bottom: 0; width: 23px; height: 25px; background: #e9eaec; border-radius: 0 4px 0 3px; }
  .map { position: relative; height: 386px; }
  .map > svg { display: block; }
  .line { fill: none; stroke-linejoin: round; }
  .border { stroke: #9590a8; stroke-width: 6.500; stroke-dasharray: 34 8 9 8; }
  .place { font-family: "Noto Sans", sans-serif; fill: #454a4b; stroke: #f5f3f0; stroke-width: 4px; stroke-opacity: .8; paint-order: stroke; }
  .place[font-size="14"], .place[font-size="23"] { stroke-width: 1.5px; }
  .quarter { font: 700 10px "Noto Sans", sans-serif; fill: #7b4b4d; stroke: #fff; stroke-width: 1px; paint-order: stroke; }
  .shield { font: 500 10px "Noto Sans", sans-serif; fill: #2e2b26; text-anchor: start; }
  .controls { position: absolute; left: 12px; top: 12px; display: flex; flex-direction: column; gap: 8px; }
  .box { width: 32px; background: #fff; border-radius: 4px; box-shadow: 0 40px 64px rgba(65, 78, 101, .1), 0 24px 32px rgba(65, 78, 101, .1), 0 16px 16px rgba(65, 78, 101, .08), 0 8px 8px rgba(65, 78, 101, .08), 0 4px 4px rgba(65, 78, 101, .08), 0 2px 2px rgba(65, 78, 101, .08); }
  .box button { width: 32px; height: 32px; }
  .layers { position: absolute; right: 12px; top: 12px; }
  .credit { position: absolute; right: 12px; bottom: 12px; font-size: 10.400px; line-height: 16px; font-weight: 700; white-space: nowrap; text-shadow: 0 0 2px #fff; }
</style>
